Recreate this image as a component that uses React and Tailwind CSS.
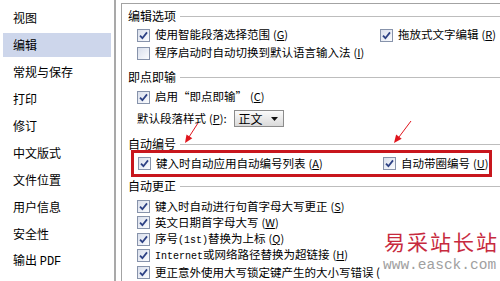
import React from 'react';

const navItems = ['视图', '编辑', '常规与保存', '打印', '修订', '中文版式', '文件位置', '用户信息', '安全性', '输出 PDF'];

const Checkbox = ({ checked = true }) => (
  <span className="flex h-[13px] w-[13px] shrink-0 items-center justify-center border border-[#8793ab] bg-linear-to-br from-[#d9dfec] to-[#fbfcfe]">
    {checked && (
      <svg width="9" height="9" viewBox="0 0 9 9">
        <path d="M1 4.6 L3.4 7.2 L8 1.4" fill="none" stroke="#2d4184" strokeWidth="1.8" />
      </svg>
    )}
  </span>
);

// half-width latin, like SimSun renders it
const Latin = ({ children, className = 'text-[10px]' }) => (
  <span className={`font-['Liberation_Mono',monospace] ${className}`}>{children}</span>
);

// accelerator key like (G)
const Key = ({ k }) => (
  <span className="ml-[3px] text-[11px]">
    (<span className="underline underline-offset-1">{k}</span>)
  </span>
);

const Option = ({ checked, label, k, className = '' }) => (
  <div className={`flex items-center gap-[5px] ${className}`}>
    <Checkbox checked={checked} />
    <span className="whitespace-nowrap leading-none">
      {label}
      {k && <Key k={k} />}
    </span>
  </div>
);

const Heading = ({ title, className = '' }) => (
  <div className={`flex h-[14px] items-center pl-[6px] ${className}`}>
    <span className="whitespace-nowrap text-[12px] leading-none">{title}</span>
    <div className="ml-[4px] h-px flex-1 bg-[#bdbdbd]" />
  </div>
);

const App = () => {
  return (
    <div className="relative flex h-[281px] w-[500px] overflow-hidden bg-white text-[12px] text-black font-['Noto_Sans_CJK_SC','Noto_Sans',sans-serif]">
      {/* Left nav */}
      <div className="w-[116px] shrink-0 border-r-2 border-[#a9a9a9] pt-[4px]">
        {navItems.map((item) => (
          <div key={item} className="h-[27px] px-[3px] py-[1.5px]">
            <div className={`flex h-[24px] items-center pl-[10px] leading-none ${item === '编辑' ? 'bg-[#cdd6eb]' : ''}`}>
              {item === '输出 PDF' ? (
                <span>
                  输出 <Latin className="text-[12px]">PDF</Latin>
                </span>
              ) : (
                item
              )}
            </div>
          </div>
        ))}
      </div>

      {/* Options panel */}
      <div className="ml-[5px] mt-[3px] flex flex-1 flex-col border-l border-t border-[#a3a3a3] pt-[5px] text-[11.5px]">
        <Heading title="编辑选项" />
        <div className="mt-[3px] flex h-[18px] items-center pl-[15px]">
          <Option label="使用智能段落选择范围" k="G" className="w-[243px]" />
          <Option label="拖放式文字编辑" k="R" />
        </div>
        <div className="flex h-[18px] items-center pl-[15px]">
          <Option checked={false} label="程序启动时自动切换到默认语言输入法" k="I" />
        </div>

        <Heading title="即点即输" className="mt-[8px]" />
        <div className="mt-[4px] flex h-[18px] items-center pl-[15px]">
          <Option label="启用“即点即输”" k="C" />
        </div>
        <div className="mt-[2px] flex h-[21px] items-center pl-[15px]">
          <span className="whitespace-nowrap leading-none">
            默认段落样式<Key k="P" />:
          </span>
          <div className="ml-[7px] flex h-[17px] w-[50px] items-center border border-[#8c8c8c] bg-linear-to-b from-[#fbfbfb] to-[#dadada] pl-[4px]">
            <span className="text-[12px] leading-none">正文</span>
            <svg className="ml-auto mr-[5px]" width="7" height="4" viewBox="0 0 7 4">
              <path d="M0 0H7L3.5 4Z" fill="#111" />
            </svg>
          </div>
        </div>

        <Heading title="自动编号" className="mt-[8px]" />
        <div className="-mt-[1px] ml-[9px] flex h-[27px] w-[361px] items-center border-[3px] border-[#c8161d] pl-[4px]">
          <Option label="键入时自动应用自动编号列表" k="A" className="w-[245px]" />
          <Option label="自动带圈编号" k="U" />
        </div>

        <Heading title="自动更正" className="mt-[2px]" />
        <div className="mt-[5px] flex flex-col pl-[15px]">
          <div className="flex h-[16.5px] items-center"><Option label="键入时自动进行句首字母大写更正" k="S" /></div>
          <div className="flex h-[16.5px] items-center"><Option label="英文日期首字母大写" k="W" /></div>
          <div className="flex h-[16.5px] items-center">
            <Option label={<>序号<Latin>(1st)</Latin>替换为上标</>} k="Q" />
          </div>
          <div className="flex h-[16.5px] items-center">
            <Option label={<><Latin>Internet</Latin>或网络路径替换为超链接</>} k="H" />
          </div>
          <div className="flex h-[16.5px] items-center">
            <Option label="更正意外使用大写锁定键产生的大小写错误 (" />
          </div>
        </div>
      </div>

      {/* red arrows */}
      <svg className="pointer-events-none absolute left-0 top-0" width="500" height="281">
        <line x1="198" y1="123" x2="189" y2="137" stroke="#e0141c" strokeWidth="1" />
        <path d="M185 143 L192.3 138.2 L186.5 134.4 Z" fill="#e0141c" />
        <line x1="411" y1="121" x2="399" y2="137" stroke="#e0141c" strokeWidth="1" />
        <path d="M394 143 L401.7 138.8 L396.1 134.6 Z" fill="#e0141c" />
      </svg>

      {/* watermark */}
      <div className="absolute left-[383px] top-[228px] flex h-[53px] w-[117px] flex-col bg-white">
        <span className="pl-[1px] text-[21px] leading-[26px] tracking-[2px] text-[#c72a3e]">易采站长站</span>
        <span className="mt-[2px] font-['Liberation_Mono',monospace] text-[14.5px] leading-[18px] text-[#a0a0a0]">
          www.easck.com
        </span>
      </div>
    </div>
  );
};

export default App;
